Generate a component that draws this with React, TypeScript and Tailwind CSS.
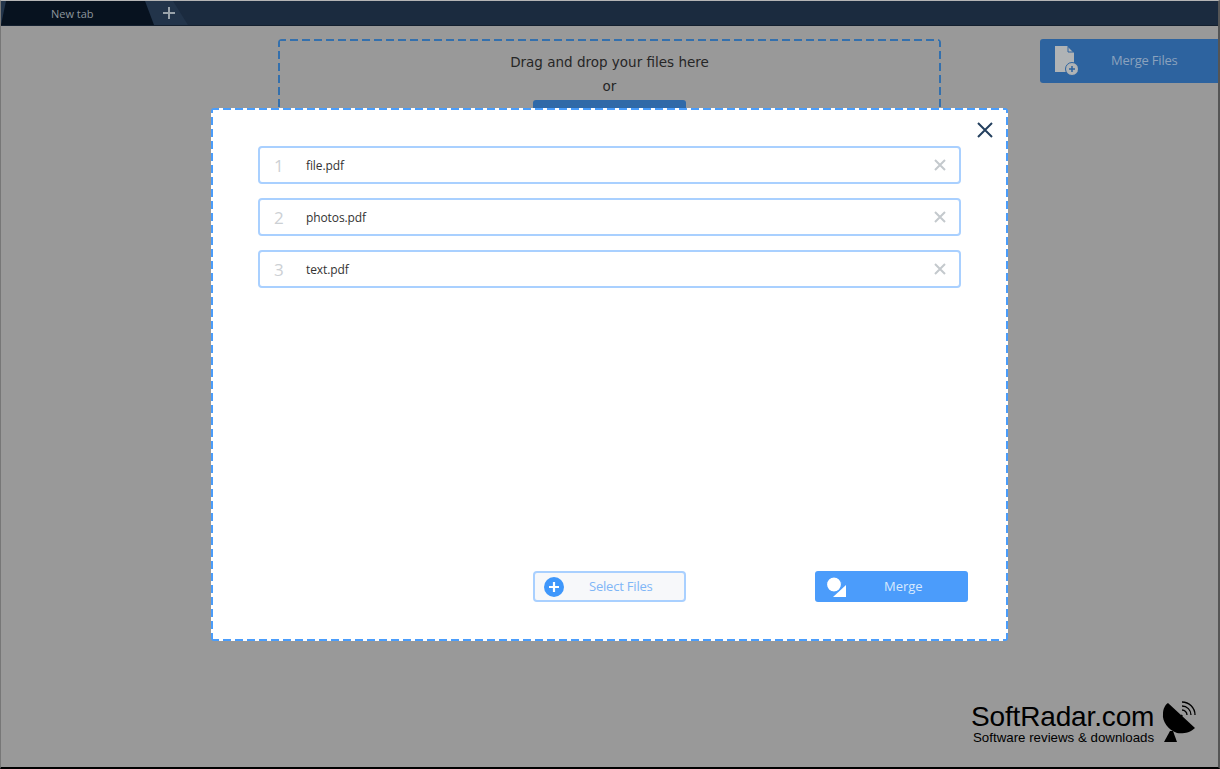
import React from "react";

function Row({ n, name }: { n: number; name: string }) {
  return (
    <div className="flex h-[38px] items-center rounded-[4px] border-2 border-[#a9d0ff] bg-white pl-[14px] pr-[13px]">
      <span className="w-[32px] text-[17px] leading-none text-[#ccd0d4]">{n}</span>
      <span className="flex-1 pt-[2px] text-[12px] tracking-[-0.1px] text-[#333]">{name}</span>
      <svg width="12" height="12" viewBox="0 0 12 12" className="text-[#c4c9cd]">
        <path d="M1 1L11 11M11 1L1 11" stroke="currentColor" strokeWidth="2" />
      </svg>
    </div>
  );
}

export default function App() {
  return (
    <div className="relative flex h-[769px] w-[1220px] flex-col overflow-hidden border-t border-l border-r-2 border-b-2 border-t-[#b5b5b5] border-l-[#777] border-r-[#555] border-b-black bg-[#999999] font-['Open_Sans','Noto_Sans',sans-serif]">
      {/* Title bar */}
      <div className="flex h-[25px] shrink-0 items-stretch bg-[#1b2b3f] border-b border-[#14202f]">
        <div className="relative w-[187px] shrink-0 bg-[#22344a] [clip-path:polygon(0_0,172px_0,187px_100%,0_100%)]">
          <div className="flex h-full w-[153px] items-center bg-[#07121f] pl-[50px] pt-[2px] text-[11px] text-[#8d959d] [clip-path:polygon(5px_0,144px_0,153px_100%,0_100%)]">
            New tab
          </div>
          <svg width="12" height="12" viewBox="0 0 12 12" className="absolute left-[162px] top-[6px] text-[#9aa3ab]">
            <path d="M6 0V12M0 6H12" stroke="currentColor" strokeWidth="2" />
          </svg>
        </div>
      </div>

      {/* Content */}
      <div className="flex flex-1 items-start pt-[13px]">
        <div className="ml-[277px] flex h-[200px] w-[663px] shrink-0 flex-col items-center rounded-[4px] bg-no-repeat pt-[13px] text-[#262626] [background-image:repeating-linear-gradient(90deg,#3470ad_0_8px,transparent_8px_12px),repeating-linear-gradient(90deg,#3470ad_0_8px,transparent_8px_12px),repeating-linear-gradient(0deg,#3470ad_0_8px,transparent_8px_12px),repeating-linear-gradient(0deg,#3470ad_0_8px,transparent_8px_12px)] [background-position:0_0,0_100%,0_0,100%_0] [background-size:100%_2px,100%_2px,2px_100%,2px_100%]">
          <div className="font-['DejaVu_Sans',sans-serif] text-[13.5px] leading-[20px]">Drag and drop your files here</div>
          <div className="mt-[4px] font-['DejaVu_Sans',sans-serif] text-[13.5px] leading-[20px]">or</div>
          <div className="mt-[4px] h-[40px] w-[153px] rounded-[3px] bg-[#2f69a8]" />
        </div>
        <div className="ml-[99px] flex h-[44px] flex-1 items-center rounded-l-[3px] bg-[#2d639f] pl-[14px]">
          <svg width="24" height="32" viewBox="0 0 24 32" className="shrink-0 text-[#b0b3b5]">
            <path d="M1 1H13L20 8V19A7 7 0 0 0 12 27H1Z" fill="currentColor" />
            <path d="M14 2V7H19" fill="none" stroke="#2d639f" strokeWidth="1" />
            <circle cx="18" cy="24" r="6.5" fill="currentColor" stroke="#2d639f" strokeWidth="1" />
            <path d="M18 21V27M15 24H21" stroke="#2d639f" strokeWidth="1.5" />
          </svg>
          <span className="ml-[33px] text-[13px] tracking-[-0.2px] text-[#8ba2bd]">Merge Files</span>
        </div>
      </div>

      {/* Modal */}
      <div className="absolute left-[210px] top-[107px] flex h-[533px] w-[797px] flex-col rounded-[3px] bg-white bg-no-repeat pl-[47px] pr-[47px] [background-image:repeating-linear-gradient(90deg,#4a9dfb_0_8px,transparent_8px_12px),repeating-linear-gradient(90deg,#4a9dfb_0_8px,transparent_8px_12px),repeating-linear-gradient(0deg,#4a9dfb_0_8px,transparent_8px_12px),repeating-linear-gradient(0deg,#4a9dfb_0_8px,transparent_8px_12px)] [background-position:0_0,0_100%,0_0,100%_0] [background-size:100%_2px,100%_2px,2px_100%,2px_100%]">
        <button className="absolute right-[15px] top-[14px] text-[#24405f]">
          <svg width="16" height="16" viewBox="0 0 16 16" className="block">
            <path d="M1 1L15 15M15 1L1 15" stroke="currentColor" strokeWidth="2" />
          </svg>
        </button>
        <div className="mt-[38px] flex flex-col gap-[14px]">
          <Row n={1} name="file.pdf" />
          <Row n={2} name="photos.pdf" />
          <Row n={3} name="text.pdf" />
        </div>
        <div className="mt-auto mb-[39px] flex items-stretch">
          <button className="ml-[275px] flex h-[31px] w-[153px] shrink-0 items-center rounded-[4px] border-2 border-[#a9d0ff] bg-[#f7f8fa] pl-[9px]">
            <svg width="20" height="20" viewBox="0 0 20 20" className="shrink-0">
              <circle cx="10" cy="10" r="10" fill="#3f97fb" />
              <path d="M10 5V15M5 10H15" stroke="#fff" strokeWidth="2.2" />
            </svg>
            <span className="ml-[25px] text-[13px] tracking-[-0.2px] text-[#7fb6f7]">Select Files</span>
          </button>
          <button className="ml-[129px] flex h-[31px] w-[153px] shrink-0 items-center rounded-[3px] bg-[#4b9cfb] pl-[11px]">
            <svg width="21" height="20" viewBox="0 0 21 20" className="shrink-0">
              <path d="M20 8V20H7Z" fill="#fff" />
              <circle cx="8" cy="7.5" r="7.5" fill="#fff" stroke="#4b9cfb" strokeWidth="1.2" />
            </svg>
            <span className="ml-[37px] text-[13px] text-[#d7e9fe]">Merge</span>
          </button>
        </div>
      </div>

      {/* Watermark */}
      <div className="absolute left-[970px] top-[700px] font-['Liberation_Sans',sans-serif] text-black">
        <div className="text-[28px] leading-[32px] tracking-[-0.15px]">SoftRadar.com</div>
        <div className="-mt-[2px] pl-[2px] text-[13.3px] leading-[14px]">Software reviews &amp; downloads</div>
      </div>
      <svg width="36" height="44" viewBox="0 0 36 44" className="absolute left-[1161px] top-[700px]">
        <path d="M6 2L33 27C28 32 20 33 15 32C6 29 0 20 1 13C1 8 3 4 6 2Z" fill="#000" />
        <path d="M8 30L2 41H15L11 30Z" fill="#000" />
        <path d="M20 14L17 19" stroke="#000" strokeWidth="2" />
        <path d="M20 9A5 5 0 0 1 25 14M20 5A9 9 0 0 1 29 14M20 1A13 13 0 0 1 33 14" stroke="#000" strokeWidth="1.3" fill="none" />
      </svg>
    </div>
  );
}
